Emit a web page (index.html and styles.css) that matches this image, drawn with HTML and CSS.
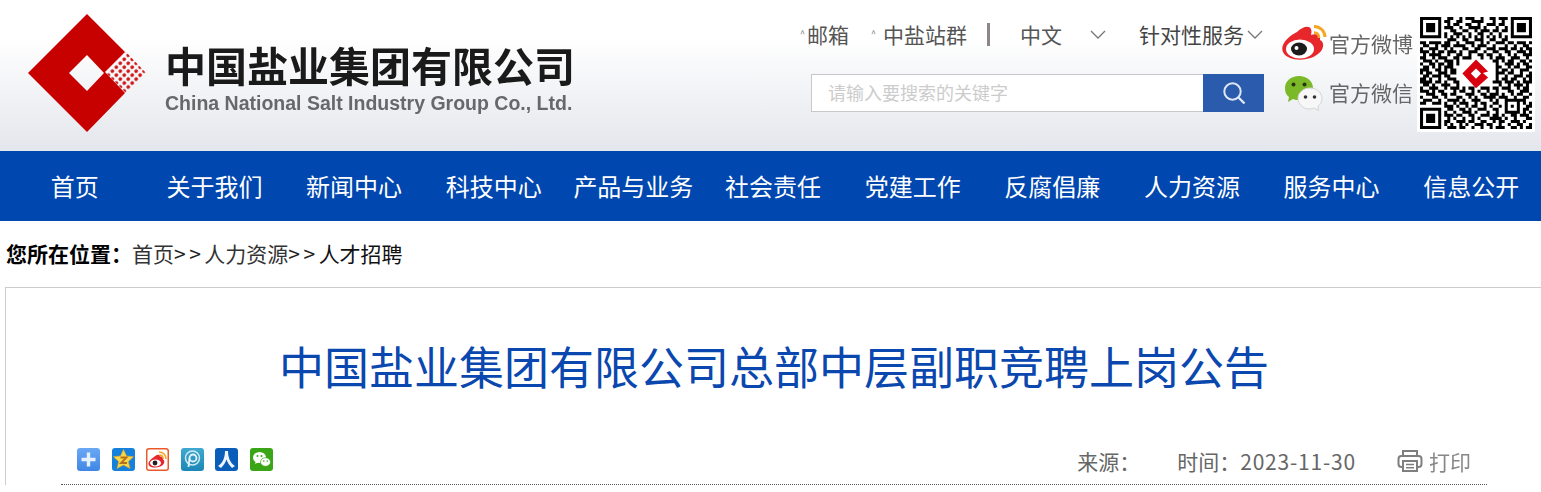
FILE: index.html
```html
<!DOCTYPE html>
<html lang="zh-CN">
<head>
    <meta charset="UTF-8">
    <meta name="viewport" content="width=device-width, initial-scale=1.0">
    <title>中国盐业集团有限公司总部中层副职竞聘上岗公告</title>
    <link rel="stylesheet" href="styles.css">
</head>
<body>
    <!-- Header -->
    <header class="header">
        <div class="logo">
            <svg class="logo-mark" width="120" height="118" viewBox="0 0 120 118">
                <defs>
                    <pattern id="dots" width="5.600" height="5.600" patternUnits="userSpaceOnUse" patternTransform="rotate(45 78 59)">
                        <circle cx="2.800" cy="2.800" r="1.800" fill="#d01010"/>
                    </pattern>
                </defs>
                <path fill="#c70000" fill-rule="evenodd" d="M59 0L97 38L77 58L97 79L59 118L0 59ZM59 41L41 59L59 77L76 59Z"/>
                <path fill="url(#dots)" d="M78 59L98 38L118 59L98 79Z"/>
            </svg>
            <div class="logo-text">
                <div class="logo-cn">中国盐业集团有限公司</div>
                <div class="logo-en">China National Salt Industry Group Co., Ltd.</div>
            </div>
        </div>

        <div class="tools">
            <div class="top-links">
                <a class="link-mail" href="#"><span class="caret">^</span>邮箱</a>
                <a class="link-sites" href="#"><span class="caret">^</span>中盐站群</a>
                <span class="divider"></span>
                <a class="link-lang" href="#">中文</a>
                <svg class="chevron chevron-lang" width="16" height="9" viewBox="0 0 16 9"><path d="M1 1l7 7 7-7" fill="none" stroke="#777" stroke-width="1.3"/></svg>
                <a class="link-service" href="#">针对性服务</a>
                <svg class="chevron chevron-service" width="16" height="9" viewBox="0 0 16 9"><path d="M1 1l7 7 7-7" fill="none" stroke="#777" stroke-width="1.3"/></svg>
            </div>
            <form class="search">
                <input class="search-input" type="text" placeholder="请输入要搜索的关键字">
                <button class="search-btn" type="button" aria-label="搜索">
                    <svg width="26" height="26" viewBox="0 0 26 26"><circle cx="11.500" cy="11.500" r="8.200" fill="none" stroke="#dfe7f5" stroke-width="2"/><path d="M17.500 17.500l6 6" stroke="#dfe7f5" stroke-width="2.400"/></svg>
                </button>
            </form>
        </div>

        <div class="social">
            <div class="social-row row-weibo">
                <svg width="48" height="39" viewBox="0 0 48 39">
                    <path fill="#e8272c" d="M16 9C21 4 28 2 30 6C31 9 30 11 30 12C35 10 40 12 39 17C44 19 43 27 37 31C30 37 17 38 9 35C2 32 0 27 2 22C4 17 10 12 16 9Z"/>
                    <ellipse cx="19" cy="26" rx="14" ry="9.500" fill="#fff"/>
                    <ellipse cx="18" cy="26" rx="8" ry="6.500" fill="#1c1c1c"/>
                    <circle cx="15.500" cy="25" r="2" fill="#fff"/>
                    <path d="M33 3.500C39 3.500 44 8 44 14" fill="none" stroke="#f5a623" stroke-width="3"/>
                    <path d="M33 9.500C36 9.500 38 11.500 38 15" fill="none" stroke="#f5a623" stroke-width="2.600"/>
                </svg>
                <span class="social-label">官方微博</span>
            </div>
            <div class="social-row row-wechat">
                <svg width="48" height="37" viewBox="0 0 48 37">
                    <path fill="#7cb928" d="M18 1C26 1 32 6 32 13C32 20 26 25 18 25C16 25 14 25 12 24L7 27L8 22C5 20 4 17 4 13C4 6 10 1 18 1Z"/>
                    <circle cx="12.500" cy="9.500" r="2" fill="#26340f"/>
                    <circle cx="23.500" cy="9.500" r="2" fill="#26340f"/>
                    <path fill="#f7f7f7" stroke="#d5d5d5" stroke-width="1" d="M29 13C36 13 41 18 41 23.500C41 27 39 30 37 31L37.500 35.500L33 33C31 34 29 34 28 34C22 34 17 29 17 23.500C17 18 22 13 29 13Z"/>
                    <circle cx="24.500" cy="22" r="1.800" fill="#333"/>
                    <circle cx="33.500" cy="22" r="1.800" fill="#333"/>
                </svg>
                <span class="social-label">官方微信</span>
            </div>
        </div>

        <div class="qr">
            <svg class="qr-code" width="118" height="118" viewBox="-1 -1 39 39">
                <path fill="none" stroke="#000" stroke-width="1" d="M0 .5h7M9 .5h2M13 .5h1M15 .5h3M20 .5h1M23 .5h2M26 .5h3M30 .5h7
                M0 1.500h1M6 1.500h1M8 1.500h2M12 1.500h2M17 1.500h4M24 1.500h1M27 1.500h1M30 1.500h1M36 1.500h1
                M0 2.500h1M2 2.500h3M6 2.500h1M9 2.500h1M11 2.500h2M15 2.500h2M19 2.500h1M22 2.500h3M26 2.500h2M30 2.500h1M32 2.500h3M36 2.500h1
                M0 3.500h1M2 3.500h3M6 3.500h1M8 3.500h3M13 3.500h1M16 3.500h4M21 3.500h1M25 3.500h1M28 3.500h1M30 3.500h1M32 3.500h3M36 3.500h1
                M0 4.500h1M2 4.500h3M6 4.500h1M10 4.500h2M14 4.500h2M18 4.500h1M20 4.500h3M24 4.500h2M27 4.500h2M30 4.500h1M32 4.500h3M36 4.500h1
                M0 5.500h1M6 5.500h1M8 5.500h1M11 5.500h3M16 5.500h1M19 5.500h2M23 5.500h1M26 5.500h1M30 5.500h1M36 5.500h1
                M0 6.500h7M8 6.500h1M10 6.500h1M12 6.500h1M14 6.500h1M16 6.500h1M18 6.500h1M20 6.500h1M22 6.500h1M24 6.500h1M26 6.500h1M28 6.500h1M30 6.500h7
                M9 7.500h3M14 7.500h2M18 7.500h3M23 7.500h2M27 7.500h2
                M0 8.500h2M3 8.500h3M6 8.500h1M8 8.500h2M12 8.500h1M15 8.500h3M20 8.500h1M22 8.500h1M25 8.500h3M29 8.500h2M32 8.500h3M36 8.500h1
                M1 9.500h2M5 9.500h1M7 9.500h3M11 9.500h4M17 9.500h1M19 9.500h3M24 9.500h1M28 9.500h1M31 9.500h1M34 9.500h2
                M0 10.500h1M3 10.500h3M8 10.500h1M10 10.500h1M14 10.500h2M18 10.500h2M22 10.500h3M26 10.500h3M30 10.500h2M33 10.500h1M35 10.500h2
                M0 11.500h3M4 11.500h1M6 11.500h2M9 11.500h3M13 11.500h1M16 11.500h3M21 11.500h1M24 11.500h2M28 11.500h2M32 11.500h3M36 11.500h1
                M1 12.500h1M3 12.500h4M9 12.500h1M12 12.500h2M16 12.500h1M19 12.500h2M22 12.500h2M26 12.500h1M29 12.500h1M31 12.500h1M34 12.500h3
                M0 13.500h2M4 13.500h1M6 13.500h3M11 13.500h2M14 13.500h3M20 13.500h1M23 13.500h1M25 13.500h3M30 13.500h3M35 13.500h1
                M1 14.500h3M5 14.500h1M8 14.500h3M12 14.500h1M24 14.500h2M27 14.500h1M29 14.500h2M33 14.500h2M36 14.500h1
                M0 15.500h1M3 15.500h2M6 15.500h2M9 15.500h2M12 15.500h1M25 15.500h1M28 15.500h3M32 15.500h1M34 15.500h2
                M1 16.500h2M4 16.500h1M6 16.500h1M8 16.500h3M25 16.500h2M29 16.500h1M31 16.500h2M35 16.500h2
                M0 17.500h3M5 17.500h2M8 17.500h1M10 17.500h2M25 17.500h1M27 17.500h2M30 17.500h1M33 17.500h3
                M0 18.500h1M2 18.500h2M6 18.500h3M10 18.500h2M25 18.500h3M29 18.500h2M33 18.500h1M36 18.500h1
                M1 19.500h2M4 19.500h3M8 19.500h2M25 19.500h1M28 19.500h1M31 19.500h3M35 19.500h2
                M0 20.500h2M3 20.500h1M6 20.500h1M9 20.500h3M25 20.500h1M27 20.500h2M30 20.500h2M34 20.500h1M36 20.500h1
                M0 21.500h4M5 21.500h2M8 21.500h1M11 21.500h2M24 21.500h3M28 21.500h3M32 21.500h1M34 21.500h3
                M1 22.500h2M4 22.500h1M7 22.500h3M12 22.500h1M26 22.500h1M29 22.500h1M31 22.500h3M35 22.500h1
                M0 23.500h1M3 23.500h3M8 23.500h1M10 23.500h3M14 23.500h1M16 23.500h2M20 23.500h3M24 23.500h2M27 23.500h3M32 23.500h1M34 23.500h2
                M0 24.500h3M4 24.500h1M6 24.500h2M11 24.500h1M13 24.500h2M17 24.500h1M19 24.500h1M22 24.500h1M25 24.500h1M29 24.500h2M33 24.500h3
                M2 25.500h3M7 25.500h2M10 25.500h2M15 25.500h3M20 25.500h2M23 25.500h3M27 25.500h1M30 25.500h1M32 25.500h2M36 25.500h1
                M0 26.500h1M4 26.500h2M8 26.500h1M12 26.500h2M16 26.500h1M18 26.500h1M21 26.500h4M26 26.500h3M31 26.500h1M34 26.500h2
                M1 27.500h3M6 27.500h1M9 27.500h4M14 27.500h1M17 27.500h3M23 27.500h1M25 27.500h1M28 27.500h7
                M0 28.500h2M4 28.500h3M8 28.500h1M11 28.500h1M13 28.500h3M18 28.500h1M20 28.500h2M24 28.500h2M28 28.500h1M32 28.500h1M34 28.500h1M36 28.500h1
                M8 29.500h3M12 29.500h1M15 29.500h1M17 29.500h2M21 29.500h1M23 29.500h1M26 29.500h1M28 29.500h1M30 29.500h1M32 29.500h1M35 29.500h2
                M0 30.500h7M9 30.500h2M13 30.500h2M16 30.500h1M19 30.500h3M24 30.500h2M28 30.500h1M32 30.500h1M34 30.500h2
                M0 31.500h1M6 31.500h1M8 31.500h1M11 31.500h1M14 31.500h3M18 31.500h1M22 31.500h1M25 31.500h1M28 31.500h5M34 31.500h1M36 31.500h1
                M0 32.500h1M2 32.500h3M6 32.500h1M8 32.500h3M12 32.500h2M16 32.500h2M20 32.500h3M24 32.500h2M27 32.500h1M30 32.500h2M33 32.500h3
                M0 33.500h1M2 33.500h3M6 33.500h1M9 33.500h1M11 33.500h1M14 33.500h1M17 33.500h1M19 33.500h1M23 33.500h4M28 33.500h1M31 33.500h1M35 33.500h2
                M0 34.500h1M2 34.500h3M6 34.500h1M8 34.500h2M12 34.500h3M16 34.500h2M20 34.500h2M24 34.500h1M26 34.500h2M30 34.500h3M34 34.500h1
                M0 35.500h1M6 35.500h1M8 35.500h1M10 35.500h1M13 35.500h1M15 35.500h1M18 35.500h3M22 35.500h2M26 35.500h1M29 35.500h1M32 35.500h2M36 35.500h1
                M0 36.500h7M9 36.500h3M13 36.500h2M17 36.500h1M20 36.500h1M23 36.500h1M25 36.500h3M30 36.500h2M33 36.500h1M35 36.500h2"/>
                <path fill="#d8000f" fill-rule="evenodd" d="M18.500 14L22.500 18L20.800 18.500L22.500 20L18.500 23.500L14 18.700ZM18.500 17L16.800 18.700L18.500 20.400L20.200 18.700Z"/>
            </svg>
        </div>
    </header>

    <!-- Navigation -->
    <nav class="nav">
        <a href="#">首页</a>
        <a href="#">关于我们</a>
        <a href="#">新闻中心</a>
        <a href="#">科技中心</a>
        <a href="#">产品与业务</a>
        <a href="#">社会责任</a>
        <a href="#">党建工作</a>
        <a href="#">反腐倡廉</a>
        <a href="#">人力资源</a>
        <a href="#">服务中心</a>
        <a href="#">信息公开</a>
    </nav>

    <div class="crumbs">
        <b>您所在位置：</b><a class="crumb-first" href="#">首页</a><span class="sep">&gt;&gt;</span><a href="#">人力资源</a><span class="sep">&gt;&gt;</span><a class="crumb-last" href="#">人才招聘</a>
    </div>

    <main class="article">
        <h1 class="article-title">中国盐业集团有限公司总部中层副职竞聘上岗公告</h1>
        <div class="article-meta">
            <div class="share">
                <a class="share-icon share-plus" href="#"><svg width="23" height="23" viewBox="0 0 23 23"><path d="M11.500 4.500v14M4.500 11.500h14" stroke="#e6f1ff" stroke-width="3.400"/></svg></a>
                <a class="share-icon share-qzone" href="#"><svg width="23" height="23" viewBox="0 0 23 23"><path fill="#f9d648" stroke="#e6a91d" stroke-width=".6" d="M11.500 1.500L14.500 8L21.500 8.800L16.300 13.500L18 20.500L11.500 17L5 20.500L6.700 13.500L1.500 8.800L8.500 8Z"/><path d="M8.500 9.500h6L9 15h6" fill="none" stroke="#b4701c" stroke-width="1.800"/></svg></a>
                <a class="share-icon share-weibo" href="#"><svg width="23" height="23" viewBox="0 0 23 23"><path fill="#e8272c" d="M8 9C11 6 14 6 14 8.500C17 8 18 10 17 11.500C20 13 18 19 10 19.500C5 20 2 18 2.500 15C3 13 5 11 8 9Z"/><ellipse cx="9.500" cy="15" rx="5.500" ry="3.500" fill="#fff"/><circle cx="9" cy="15" r="2.400" fill="#222"/><path d="M13 4C17 4 20 7 20 11M13.500 7C15.500 7 17 8.500 17 10.500" fill="none" stroke="#f5a623" stroke-width="1.600"/></svg></a>
                <a class="share-icon share-pengyou" href="#"><svg width="23" height="23" viewBox="0 0 23 23"><circle cx="11.500" cy="10" r="7" fill="none" stroke="#cdeaf5" stroke-width="1.500"/><circle cx="12" cy="10" r="3.500" fill="none" stroke="#e5f6fb" stroke-width="1.800"/><path d="M8.500 10L7.500 19" stroke="#e5f6fb" stroke-width="1.800"/></svg></a>
                <a class="share-icon share-renren" href="#"><svg width="23" height="23" viewBox="0 0 23 23"><path fill="#eef5ff" d="M10 3h3C13 9 15 15 20 18L17 20C14.500 17.500 12.500 14.500 11.500 11.500C10.500 14.500 8.500 17.500 6 20L3 18C8 15 10 9 10 3Z"/></svg></a>
                <a class="share-icon share-wechat" href="#"><svg width="23" height="23" viewBox="0 0 23 23"><ellipse cx="9.500" cy="9.500" rx="6.500" ry="5.500" fill="#fff"/><path d="M6 13l-1 3 4-2z" fill="#fff"/><ellipse cx="15.500" cy="14" rx="5" ry="4.300" fill="#fff" stroke="#3aa516" stroke-width=".7"/><circle cx="7.500" cy="8" r="1" fill="#3aa516"/><circle cx="11.500" cy="8" r="1" fill="#3aa516"/><circle cx="13.800" cy="13" r=".8" fill="#3aa516"/><circle cx="17.300" cy="13" r=".8" fill="#3aa516"/></svg></a>
            </div>
            <div class="info">
                <span class="info-source">来源：</span>
                <span class="info-time">时间：<span class="info-date">2023-11-30</span></span>
                <a class="print" href="#">
                    <svg width="26" height="24" viewBox="0 0 26 24" fill="none" stroke="#7f7f7f" stroke-width="2"><path d="M6 7V2h14v5"/><rect x="1.500" y="7" width="23" height="11" rx="3"/><rect x="6" y="12" width="14" height="10" fill="#fff"/><path d="M9 15.500h8M9 18.800h8" stroke-width="1.600"/></svg>
                    <span>打印</span>
                </a>
            </div>
        </div>
    </main>
</body>
</html>
```

FILE: styles.css
```css
/* General */
html, body {
    margin: 0;
    padding: 0;
    overflow: hidden;
}

body {
    font-family: "Noto Sans CJK SC", "Noto Sans", sans-serif;
    background: #fff;
    color: #333;
}

a {
    color: inherit;
    text-decoration: none;
}

/* Header */
.header {
    display: flex;
    height: 151px;
    padding-right: 6px;
    box-sizing: border-box;
    background: linear-gradient(#fff 0, #fff 38px, #e3e6ec 100%);
}

.logo {
    display: flex;
    margin-left: 28px;
    margin-right: auto;
}

.logo-mark {
    margin-top: 14px;
}

.logo-text {
    margin-left: 17px;
    margin-top: 41px;
}

.logo-cn {
    font-size: 41px;
    line-height: 46px;
    font-weight: 700;
    color: #1a1a1a;
    white-space: nowrap;
    filter: blur(.4px);
}

.logo-en {
    margin-top: 4px;
    font-family: "Liberation Sans", Arial, sans-serif;
    font-size: 19.500px;
    line-height: 24px;
    font-weight: 700;
    color: #66686c;
    white-space: nowrap;
    filter: blur(.4px);
}

/* Top links and search */
.tools {
    width: 464px;
    padding-top: 18px;
    margin-right: 17px;
}

.top-links {
    display: flex;
    align-items: center;
    height: 32px;
    font-size: 21px;
    line-height: 32px;
    color: #555;
    white-space: nowrap;
}

.top-links a, .top-links svg, .divider {
    flex-shrink: 0;
}

.caret {
    display: inline-block;
    width: 7px;
    font-size: 9px;
    line-height: 32px;
    color: #777;
    vertical-align: top;
}

.link-sites {
    margin-left: 22px;
}

.link-sites .caret {
    width: 12px;
}

.divider {
    width: 3px;
    height: 23px;
    margin-left: 20px;
    background: #8c8686;
}

.link-lang {
    margin-left: 30px;
}

.chevron-lang {
    margin-left: 28px;
}

.link-service {
    margin-left: 33px;
    color: #444;
}

.chevron-service {
    margin-left: 3px;
}

.search {
    display: flex;
    height: 38px;
    margin-top: 24px;
    margin-left: 11px;
}

.search-input {
    width: 392px;
    height: 38px;
    padding: 0 16px 3px;
    box-sizing: border-box;
    border: 1px solid #c8c8cc;
    border-right: none;
    background: #fff;
    font-family: inherit;
    font-size: 18px;
    outline: none;
}

.search-input::placeholder {
    color: #ccc;
}

.search-btn {
    display: flex;
    align-items: center;
    justify-content: center;
    width: 61px;
    height: 38px;
    padding: 0;
    border: none;
    background: #2b5bad;
}

/* Weibo, wechat */
.social {
    width: 134px;
    padding-top: 23px;
}

.social-row {
    display: flex;
    align-items: center;
}

.row-weibo {
    height: 39px;
}

.row-wechat {
    height: 37px;
    margin-top: 13px;
}

.social-label {
    font-size: 21px;
    line-height: 28px;
    color: #666;
    white-space: nowrap;
    filter: blur(.3px);
}

.row-wechat .social-label {
    margin-top: -3px;
}

.qr {
    width: 118px;
    margin-left: 2px;
    padding-top: 14px;
}

.qr-code {
    display: block;
    background: #fff;
    filter: blur(.5px);
}

/* Nav */
.nav {
    display: flex;
    height: 70px;
    padding-left: 5px;
    background: #0047af;
}

.nav a {
    flex: 1;
    font-size: 24px;
    line-height: 70px;
    color: #fff;
    text-align: center;
    white-space: nowrap;
}

/* Breadcrumb */
.crumbs {
    height: 66px;
    padding-left: 6px;
    box-sizing: border-box;
    font-size: 21px;
    line-height: 64px;
    color: #333;
    white-space: nowrap;
}

.crumbs b {
    color: #000;
}

.sep {
    letter-spacing: 3.500px;
    color: #222;
}

.crumb-last {
    color: #111;
}

/* Article */
.article {
    margin-left: 5px;
    padding: 0 54px 0 55px;
    border-top: 1px solid #ccc;
    border-left: 1px solid #ccc;
}

.article-title {
    margin: 0;
    padding-top: 48px;
    font-size: 45px;
    line-height: 60px;
    font-weight: 400;
    color: #0a47ae;
    text-align: center;
    white-space: nowrap;
}

.article-meta {
    display: flex;
    justify-content: space-between;
    align-items: center;
    height: 38px;
    margin-top: 50px;
    padding: 0 16px;
    border-bottom: 1px dotted #555;
}

.share {
    display: flex;
    gap: 11.600px;
    margin-top: -12px;
}

.share-icon {
    display: block;
    width: 23px;
    height: 23px;
    border-radius: 3px;
}

.share-icon svg {
    display: block;
}

.share-plus {
    background: linear-gradient(#6aa8f5, #3f86e4);
}

.share-qzone {
    background: #1681dc;
}

.share-weibo {
    background: #fff;
    box-shadow: inset 0 0 0 1.500px #ea5a28;
}

.share-pengyou {
    background: linear-gradient(#3fa9cf, #1c86b6);
}

.share-renren {
    background: #0b5dba;
}

.share-wechat {
    background: #3aa516;
}

.info {
    display: flex;
    align-items: center;
    margin-top: -8px;
    font-size: 21px;
    line-height: 30px;
    color: #666;
}

.info-time {
    margin-left: 37px;
}

.info-date {
    letter-spacing: .8px;
}

.print {
    display: flex;
    align-items: center;
    margin-left: 41px;
    color: #888;
}

.print span {
    margin-left: 6px;
    filter: blur(.3px);
}
```
